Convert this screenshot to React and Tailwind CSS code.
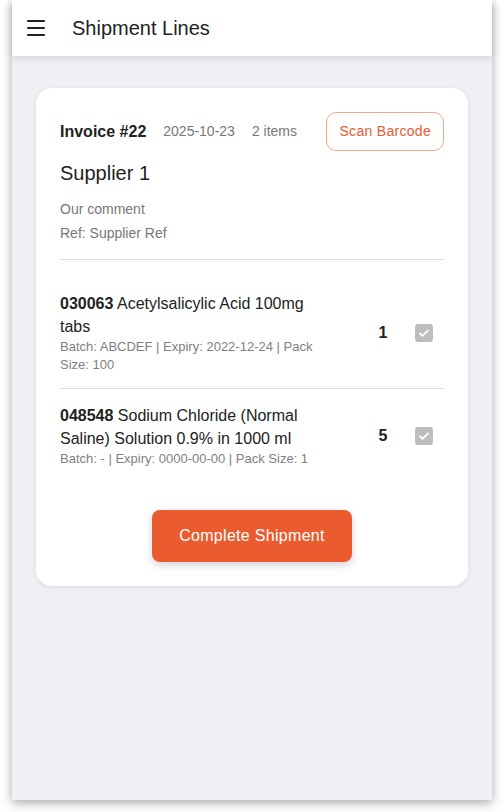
import { Menu } from 'lucide-react';

const lines = [
  {
    code: '030063',
    name: 'Acetylsalicylic Acid 100mg tabs',
    meta: 'Batch: ABCDEF | Expiry: 2022-12-24 | Pack Size: 100',
    qty: 1,
  },
  {
    code: '048548',
    name: 'Sodium Chloride (Normal Saline) Solution 0.9% in 1000 ml',
    meta: 'Batch: - | Expiry: 0000-00-00 | Pack Size: 1',
    qty: 5,
  },
];

function CheckedBox() {
  return (
    <div className="w-[18px] h-[18px] rounded-[3px] bg-[#bdbdbd] flex items-center justify-center">
      <svg width="14" height="14" viewBox="0 0 24 24" fill="none" stroke="white" strokeWidth="3" strokeLinecap="round" strokeLinejoin="round">
        <path d="M5 12.5l4.5 4.5L19 7.5" />
      </svg>
    </div>
  );
}

export default function App() {
  return (
    <div className="w-full h-[812px] bg-white font-['Liberation_Sans',Arial,sans-serif]">
      <div className="ml-[12px] w-[480px] h-[800px] bg-[#eff0f4] shadow-[0_3px_10px_rgba(0,0,0,0.35)] flex flex-col">
        <header className="h-14 bg-white flex items-center shrink-0 shadow-[0_2px_8px_rgba(0,0,0,0.12)] relative z-10">
          <Menu size={24} strokeWidth={2} className="ml-3 text-[#222]" />
          <h1 className="ml-6 text-[20px] text-[#222]">Shipment Lines</h1>
        </header>

        <div className="px-6 pt-8">
          <div className="bg-white rounded-2xl px-6 pt-6 pb-6 shadow-[0_1px_6px_rgba(0,0,0,0.08)]">
            <div className="border-b border-[#dedede] pb-3.5">
              <div className="flex items-center h-[39px]">
                <span className="text-[16px] font-bold text-[#222]">Invoice #22</span>
                <span className="ml-[17px] text-[14px] text-[#777]">2025-10-23</span>
                <span className="ml-[17px] text-[14px] text-[#777]">2 items</span>
                <button className="ml-auto h-[39px] px-[12px] rounded-[10px] border border-[#f5a88f] text-[14px] text-[#e85a2c] tracking-[0.3px]">
                  Scan Barcode
                </button>
              </div>
              <div className="mt-2 text-[20px] leading-7 text-[#222]">Supplier 1</div>
              <div className="mt-2.5 text-[14px] leading-6 text-[#777]">Our comment</div>
              <div className="text-[14px] leading-6 text-[#777]">Ref: Supplier Ref</div>
            </div>

            <div className="pt-[17px]">
              {lines.map((l, i) => (
                <div
                  key={l.code}
                  className={`flex items-center ${i < lines.length - 1 ? 'pt-[15px] pb-[14px] border-b border-[#dedede]' : 'py-[15px]'}`}
                >
                  <div className="w-[262px]">
                    <div className="text-[16px] leading-[23px] text-[#222]">
                      <span className="font-bold">{l.code}</span> {l.name}
                    </div>
                    <div className="text-[13px] leading-[18px] text-[#808080]">{l.meta}</div>
                  </div>
                  <div className="ml-auto w-[40px] text-center text-[16px] font-bold text-[#222]">{l.qty}</div>
                  <div className="w-[41px] flex justify-center">
                    <CheckedBox />
                  </div>
                </div>
              ))}
            </div>

            <div className="flex justify-center mt-[27px]">
              <button className="w-[200px] h-[52px] rounded-[8px] bg-[#ea5c2f] text-white text-[16px] tracking-[0.3px] shadow-[0_3px_8px_rgba(0,0,0,0.18)]">
                Complete Shipment
              </button>
            </div>
          </div>
        </div>
      </div>
    </div>
  );
}
